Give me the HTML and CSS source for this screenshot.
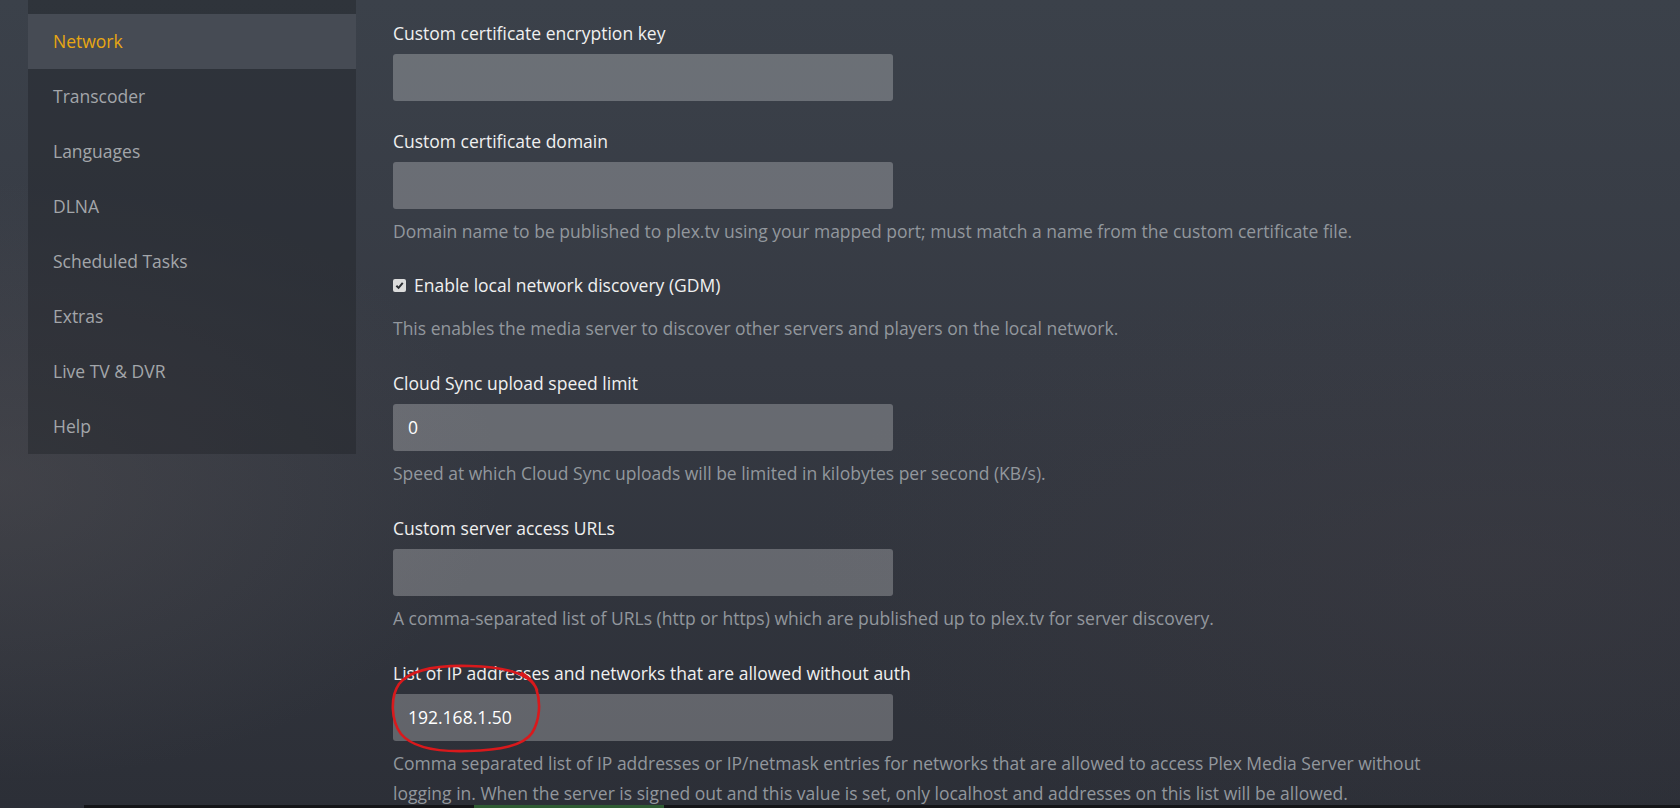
FILE: index.html
```html
<!DOCTYPE html>
<html lang="en">

<head>
    <meta charset="UTF-8">
    <meta name="viewport" content="width=device-width, initial-scale=1.0">
    <title>Settings - Network</title>
    <link rel="stylesheet" href="styles.css">
</head>

<body>
    <div class="page">
        <nav class="sidebar">
            <a class="nav-item active" href="#">Network</a>
            <a class="nav-item" href="#">Transcoder</a>
            <a class="nav-item" href="#">Languages</a>
            <a class="nav-item" href="#">DLNA</a>
            <a class="nav-item" href="#">Scheduled Tasks</a>
            <a class="nav-item" href="#">Extras</a>
            <a class="nav-item" href="#">Live TV &amp; DVR</a>
            <a class="nav-item" href="#">Help</a>
        </nav>

        <main class="settings">
            <div class="group">
                <label class="label">Custom certificate encryption key</label>
                <div class="input"></div>
            </div>

            <div class="group">
                <label class="label">Custom certificate domain</label>
                <div class="input"></div>
                <p class="help">Domain name to be published to plex.tv using your mapped port; must match a name from the custom certificate file.</p>
            </div>

            <div class="group">
                <label class="check-row">
                    <span class="checkbox">
                        <svg width="9" height="9" viewBox="0 0 10 10"><path d="M1.5 5.2 L4 7.6 L8.6 2.2" fill="none" stroke="#2b2e33" stroke-width="2.2"/></svg>
                    </span>
                    Enable local network discovery (GDM)
                </label>
                <p class="help help-check">This enables the media server to discover other servers and players on the local network.</p>
            </div>

            <div class="group">
                <label class="label">Cloud Sync upload speed limit</label>
                <div class="input">0</div>
                <p class="help">Speed at which Cloud Sync uploads will be limited in kilobytes per second (KB/s).</p>
            </div>

            <div class="group">
                <label class="label">Custom server access URLs</label>
                <div class="input"></div>
                <p class="help">A comma-separated list of URLs (http or https) which are published up to plex.tv for server discovery.</p>
            </div>

            <div class="group">
                <label class="label">List of IP addresses and networks that are allowed without auth</label>
                <div class="input">192.168.1.50</div>
                <p class="help">Comma separated list of IP addresses or IP/netmask entries for networks that are allowed to access Plex Media Server without logging in. When the server is signed out and this value is set, only localhost and addresses on this list will be allowed.</p>
            </div>
        </main>
    </div>

    <!-- red marker drawn over the screenshot -->
    <svg class="scribble" width="1680" height="808" viewBox="0 0 1680 808">
        <path d="M537 690 C531 674 505 667 470 666 C437 665 410 670 399 684 C390 697 391 721 401 734 C413 748 440 752 468 751 C500 750 523 746 532 733 C540 720 541 702 536 688 C533 680 527 676 522 673"
              fill="none" stroke="#d9191c" stroke-width="2.6" stroke-linecap="round"/>
    </svg>

    <div class="taskbar"><span class="task-app"></span></div>
</body>

</html>
```

FILE: styles.css
```css
body {
    margin: 0;
    padding: 0;
    height: 808px;
    overflow: hidden;
    font-family: "Open Sans", "Liberation Sans", sans-serif;
    font-size: 17.5px;
    background-color: #33373f;
    background-image:
        radial-gradient(ellipse 500px 300px at 0px 480px, rgba(90, 86, 88, 0.35), rgba(90, 86, 88, 0) 100%),
        radial-gradient(ellipse 700px 300px at 1500px 560px, rgba(70, 64, 70, 0.25), rgba(70, 64, 70, 0) 100%),
        linear-gradient(to bottom, #3b414a 0%, #363a43 45%, #2c2f37 100%);
}

.page {
    display: flex;
    align-items: flex-start;
}

.sidebar {
    width: 328px;
    margin-left: 28px;
    padding-top: 14px;
    background-color: rgba(30, 32, 38, 0.4);
    display: flex;
    flex-direction: column;
}

.nav-item {
    height: 55px;
    line-height: 55px;
    padding-left: 25px;
    color: #a3a6aa;
    text-decoration: none;
}

.nav-item.active {
    background-color: #464b54;
    color: #e8a712;
}

.settings {
    margin-left: 37px;
    padding-top: 20px;
    width: 1050px;
}

.group {
    margin-bottom: 27px;
}

.label {
    display: block;
    line-height: 26px;
    margin-bottom: 8px;
    color: #f0f0f0;
}

.input {
    width: 500px;
    height: 47px;
    box-sizing: border-box;
    padding-left: 15px;
    line-height: 47px;
    border-radius: 3px;
    background-color: rgba(255, 255, 255, 0.25);
    color: #ffffff;
}

.help {
    margin: 7px 0 0;
    line-height: 30px;
    color: #92979d;
}

.help-check {
    margin-top: 16px;
}

.check-row {
    display: flex;
    align-items: center;
    gap: 8px;
    line-height: 24px;
    color: #f0f0f0;
}

.checkbox {
    width: 13px;
    height: 13px;
    border-radius: 2px;
    background-color: #dcdcdc;
    display: flex;
    align-items: center;
    justify-content: center;
}

.scribble {
    position: absolute;
    left: 0;
    top: 0;
    pointer-events: none;
}

.taskbar {
    position: fixed;
    left: 84px;
    right: 0;
    bottom: 0;
    height: 3px;
    background-color: #141518;
}

.task-app {
    display: block;
    margin-left: 390px;
    width: 190px;
    height: 3px;
    background-color: #2f5c33;
}
```
